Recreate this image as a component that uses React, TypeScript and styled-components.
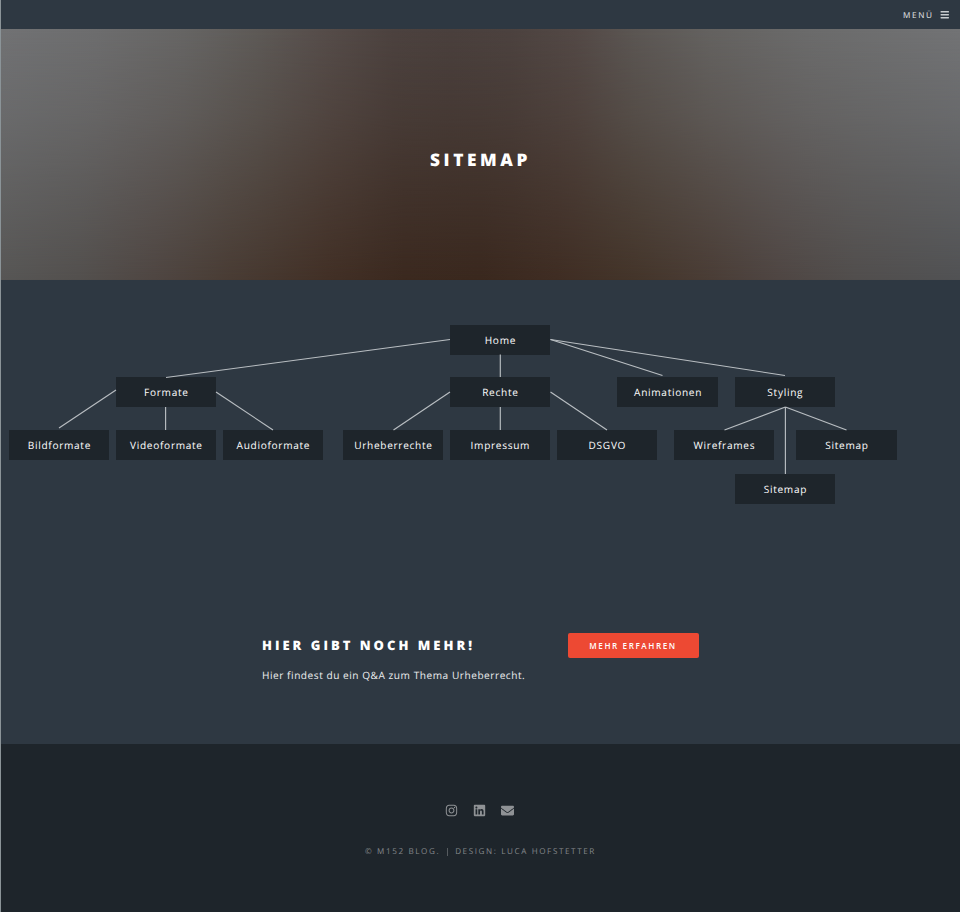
import React from "react";
import styled, { createGlobalStyle } from "styled-components";
import { FaBars, FaEnvelope, FaInstagram, FaLinkedin } from "react-icons/fa";

const GlobalStyle = createGlobalStyle`
  * { box-sizing: border-box; }
  body {
    margin: 0;
    background: #2e3842;
    color: #fff;
    font-family: "Open Sans", "Noto Sans", sans-serif;
    text-rendering: geometricPrecision;
  }
`;

const Page = styled.div`
  display: flex;
  flex-direction: column;
  width: 960px;
  height: 912px;
  overflow: hidden;
  border-left: 1px solid #8b9498;
  background: #2e3842;
`;

const Header = styled.header`
  display: flex;
  flex: 0 0 29px;
  align-items: center;
  justify-content: flex-end;
  padding: 2px 11px 0 0;
`;

const MenuLink = styled.a`
  display: flex;
  align-items: center;
  gap: 6px;
  color: #e9ebec;
  font-size: 8.2px;
  letter-spacing: 1.6px;
  line-height: 13px;
  svg {
    margin-top: -1px;
    color: #c8cccf;
  }
`;

const Banner = styled.section`
  position: relative;
  display: flex;
  flex: 0 0 251px;
  align-items: center;
  justify-content: center;
  padding: 13px 0 0;
  background: linear-gradient(
    90deg,
    #575655 0%,
    #53504e 8%,
    #4f4642 16%,
    #493c34 24%,
    #423026 34%,
    #3b291f 42%,
    #3a281e 50%,
    #3f2d23 58%,
    #44352a 66%,
    #4a3d36 74%,
    #4f4643 81%,
    #514e4d 89%,
    #515254 100%
  );

  &::before {
    content: "";
    position: absolute;
    inset: 0;
    background: linear-gradient(
      90deg,
      #717274 0%,
      #6d6d6e 10%,
      #666564 19%,
      #5d5956 27%,
      #554c49 34%,
      #4c423f 41%,
      #4a403d 47%,
      #4c423f 53%,
      #534946 60%,
      #5b5653 66%,
      #646260 74%,
      #6b6b6b 84%,
      #727375 100%
    );
    mask-image: linear-gradient(#000, rgba(0, 0, 0, 0.72) 35%, rgba(0, 0, 0, 0.33) 70%, transparent);
  }
`;

const BannerTitle = styled.h1`
  position: relative;
  margin: 0;
  font-size: 17.3px;
  font-weight: 800;
  letter-spacing: 3.6px;
  line-height: 26px;
`;

const Diagram = styled.section`
  position: relative;
  flex: 0 0 330px;
`;

const Connections = styled.svg`
  position: absolute;
  z-index: 1;
  inset: 0;
  width: 959px;
  height: 330px;
  stroke: #b9bec2;
  stroke-width: 1.15;
`;

const Node = styled.div<{ $x: number; $y: number }>`
  position: absolute;
  left: ${(p) => p.$x}px;
  top: ${(p) => p.$y}px;
  display: flex;
  align-items: center;
  justify-content: center;
  width: 100.4px;
  height: 30px;
  padding: 0 0 0 1px;
  background: #1e252b;
  font-size: 10.1px;
  letter-spacing: 0.7px;
  white-space: nowrap;
`;

const CallToAction = styled.section`
  display: flex;
  flex: 0 0 134px;
  align-items: flex-start;
  padding: 23px 0 0 261px;
`;

const CtaText = styled.div`
  width: 305.5px;
`;

const CtaTitle = styled.h2`
  margin: -1px 0 0;
  font-size: 13px;
  font-weight: 800;
  letter-spacing: 3px;
  line-height: 26px;
  white-space: nowrap;
`;

const CtaCopy = styled.p`
  margin: 7px 0 0;
  color: #eceeef;
  font-size: 10.1px;
  letter-spacing: 0.54px;
  line-height: 20px;
  white-space: nowrap;
`;

const CtaButton = styled.button`
  width: 131px;
  height: 25px;
  padding: 0;
  border: 0;
  border-radius: 2px;
  background: #ed4933;
  color: #fff;
  font-family: inherit;
  font-size: 8.1px;
  font-weight: 600;
  letter-spacing: 1.6px;
`;

const Footer = styled.footer`
  display: flex;
  flex: 1;
  flex-direction: column;
  align-items: center;
  padding: 60px 2px 0 0;
  background: #1e252b;
  color: #8f9295;
`;

const SocialLinks = styled.nav`
  display: flex;
  align-items: center;
  gap: 15px;
  height: 13px;
`;

const Copyright = styled.div`
  display: flex;
  margin-top: 29px;
  padding-left: 2px;
  color: #85898c;
  font-size: 8.1px;
  letter-spacing: 1.6px;
  line-height: 12px;
`;

const Divider = styled.span`
  width: 1px;
  height: 8px;
  margin: 2px 7px 0 7px;
  background: #565b5f;
`;

const nodes = [
  { label: "Home", x: 448.7, y: 44.5 },
  { label: "Formate", x: 114.7, y: 97.3 },
  { label: "Rechte", x: 448.7, y: 97.3 },
  { label: "Animationen", x: 616.4, y: 97.4 },
  { label: "Styling", x: 733.6, y: 97.4 },
  { label: "Bildformate", x: 7.7, y: 150 },
  { label: "Videoformate", x: 114.7, y: 150 },
  { label: "Audioformate", x: 221.7, y: 150 },
  { label: "Urheberrechte", x: 341.7, y: 150 },
  { label: "Impressum", x: 448.7, y: 150 },
  { label: "DSGVO", x: 555.7, y: 150 },
  { label: "Wireframes", x: 672.7, y: 150 },
  { label: "Sitemap", x: 795.3, y: 150 },
  { label: "Sitemap", x: 733.7, y: 194 },
];

const lines = [
  [449, 59.5, 165, 97.5],
  [499.3, 74.5, 499.3, 97],
  [549.5, 59.5, 661.5, 95.5],
  [549.5, 59.5, 784, 95.5],
  [115, 110, 58, 148],
  [164.6, 127, 164.6, 150],
  [215, 112, 272, 150],
  [449, 112, 392.5, 150],
  [499.3, 127, 499.3, 150],
  [549.5, 112, 606, 150],
  [784.4, 127, 723.5, 150],
  [784.4, 127, 784.4, 194],
  [784.4, 127, 845.5, 150],
];

export default function App() {
  return (
    <>
      <GlobalStyle />
      <Page>
        <Header>
          <MenuLink>
            MENÜ <FaBars size={9.5} />
          </MenuLink>
        </Header>
        <Banner>
          <BannerTitle>SITEMAP</BannerTitle>
        </Banner>
        <Diagram>
          <Connections>
            {lines.map(([x1, y1, x2, y2], i) => (
              <line key={i} x1={x1} y1={y1} x2={x2} y2={y2} />
            ))}
          </Connections>
          {nodes.map((n) => (
            <Node key={`${n.x}-${n.y}`} $x={n.x} $y={n.y}>
              {n.label}
            </Node>
          ))}
        </Diagram>
        <CallToAction>
          <CtaText>
            <CtaTitle>HIER GIBT NOCH MEHR!</CtaTitle>
            <CtaCopy>Hier findest du ein Q&amp;A zum Thema Urheberrecht.</CtaCopy>
          </CtaText>
          <CtaButton>MEHR ERFAHREN</CtaButton>
        </CallToAction>
        <Footer>
          <SocialLinks>
            <FaInstagram size={13} />
            <FaLinkedin size={13} />
            <FaEnvelope size={13} />
          </SocialLinks>
          <Copyright>
            <span>© M152 BLOG.</span>
            <Divider />
            <span>DESIGN: LUCA HOFSTETTER</span>
          </Copyright>
        </Footer>
      </Page>
    </>
  );
}
